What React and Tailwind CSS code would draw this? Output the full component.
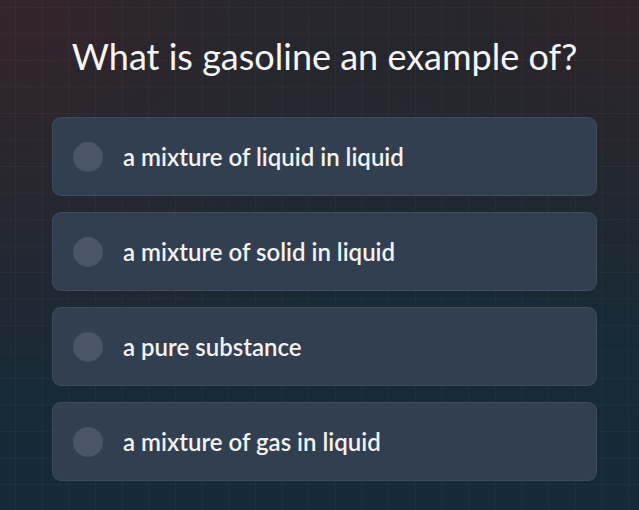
export default function App() {
  const options = [
    "a mixture of liquid in liquid",
    "a mixture of solid in liquid",
    "a pure substance",
    "a mixture of gas in liquid",
  ];
  return (
    <div
      className="w-[639px] h-[510px] overflow-hidden font-['Lato','Liberation_Sans',sans-serif] bg-[#17293a] [background-image:linear-gradient(rgba(255,255,255,0.032)_1px,transparent_1px),linear-gradient(90deg,rgba(255,255,255,0.032)_1px,transparent_1px),radial-gradient(ellipse_at_0%_0%,#35242b_0%,rgba(53,36,43,0)_55%),radial-gradient(ellipse_at_100%_0%,#2f2329_0%,rgba(47,35,41,0)_45%),linear-gradient(#1b2930,#142a39)] [background-size:26.67px_26.5px,26.67px_26.5px,100%_100%,100%_100%,100%_100%] [background-position:15px_7px,15px_7px,0_0,0_0,0_0]"
    >
      <div className="ml-[52px] w-[545px] flex flex-col">
        <h1 className="mt-[29px] h-[54px] text-center text-[36px] leading-[54px] text-[#f5f5f5] font-normal">
          What is gasoline an example of?
        </h1>
        <div className="mt-[34px] flex flex-col gap-[16px]">
          {options.map((o) => (
            <div
              key={o}
              className="h-[79px] rounded-[9px] bg-[#323f50] border border-[rgba(255,255,255,0.07)] flex items-center pl-[20px] gap-[20px]"
            >
              <div className="w-[30px] h-[30px] rounded-full bg-[#4a5567]" />
              <span className="text-[24px] font-semibold text-[#f2f2f2]">{o}</span>
            </div>
          ))}
        </div>
      </div>
    </div>
  );
}
